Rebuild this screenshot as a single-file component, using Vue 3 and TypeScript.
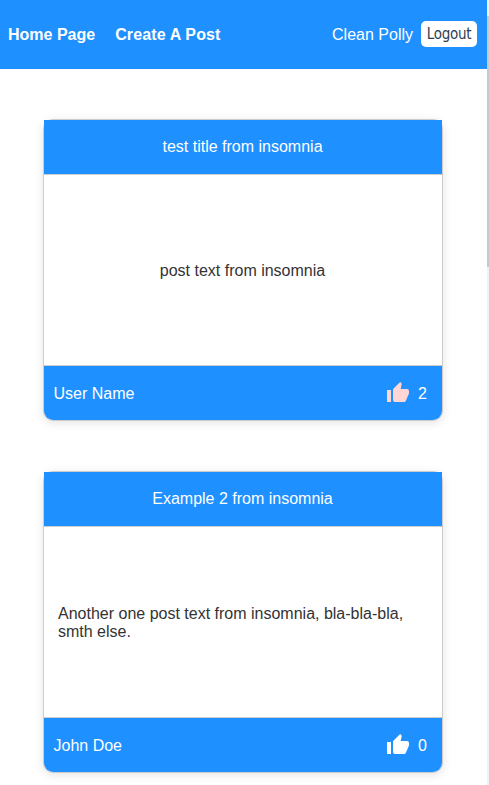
<script setup lang="ts">
import { ref } from 'vue'

interface Post {
  id: number
  title: string
  text: string
  author: string
  likes: number
  liked: boolean
}

const userName = ref('Clean Polly')

const posts = ref<Post[]>([
  { id: 1, title: 'test title from insomnia', text: 'post text from insomnia', author: 'User Name', likes: 2, liked: true },
  { id: 2, title: 'Example 2 from insomnia', text: 'Another one post text from insomnia, bla-bla-bla, smth else.', author: 'John Doe', likes: 0, liked: false },
])

function toggleLike(post: Post): void {
  post.liked = !post.liked
  post.likes += post.liked ? 1 : -1
}
</script>

<template>
  <div class="app">
    <div class="page">
      <header class="topbar">
        <nav class="links">
          <a class="link">Home Page</a>
          <a class="link wide">Create A Post</a>
        </nav>
        <div class="account">
          <span>{{ userName }}</span>
          <button class="logout" type="button">Logout</button>
        </div>
      </header>
      <main class="posts">
        <article v-for="post in posts" :key="post.id" class="card">
          <div class="card-title">{{ post.title }}</div>
          <div class="card-body"><p>{{ post.text }}</p></div>
          <div class="card-footer">
            <span class="label">{{ post.author }}</span>
            <div class="likes">
              <svg class="thumb" :class="{ liked: post.liked }" viewBox="0 0 24 24" @click="toggleLike(post)">
                <path d="M1 21h4V9H1v12zm22-11c0-1.1-.9-2-2-2h-6.31l.95-4.57.03-.32c0-.41-.17-.79-.44-1.06L14.17 1 7.59 7.59C7.22 7.95 7 8.45 7 9v10c0 1.1.9 2 2 2h9c.83 0 1.54-.5 1.84-1.22l3.02-7.05c.09-.23.14-.47.14-.73v-2z" />
              </svg>
              <span class="label">{{ post.likes }}</span>
            </div>
          </div>
        </article>
      </main>
    </div>
    <div class="scroll-track">
      <div class="scroll-thumb"></div>
    </div>
  </div>
</template>

<style>
body {
  margin: 0;
  overflow: hidden;
}
</style>

<style scoped>
.app {
  display: flex;
  height: 785px;
  overflow: hidden;
  background: #fff;
  color: #333;
  font: 16px/18px "Liberation Sans", Arial, sans-serif;
}
.page {
  flex: 1;
  min-width: 0;
}
.topbar {
  display: flex;
  align-items: center;
  justify-content: space-between;
  box-sizing: border-box;
  height: 69px;
  padding: 0 10px 0 8px;
  background: #1e90ff;
  color: #fff;
}
.links {
  display: flex;
  gap: 20px;
}
.link {
  font-weight: 700;
}
.link.wide {
  letter-spacing: 0.13px;
}
.account {
  display: flex;
  align-items: center;
  gap: 8px;
}
.logout {
  width: 56px;
  height: 26px;
  margin: 0 0 1px;
  padding: 1px 0 0;
  border: 0;
  border-radius: 5px;
  background: #fff;
  color: #2c3e50;
  font: 15px/25px "DejaVu Sans Condensed", "DejaVu Sans", sans-serif;
  font-stretch: condensed;
  letter-spacing: -0.3px;
}
.posts {
  display: flex;
  flex-direction: column;
  gap: 50px;
  padding: 50px 44px 0 43px;
}
.card {
  box-sizing: border-box;
  width: 400px;
  height: 302px;
  display: flex;
  flex-direction: column;
  border: 1px solid #ccc;
  border-radius: 10px;
  box-shadow: 0 2px 10px rgba(0, 0, 0, 0.11);
}
.card-title {
  display: flex;
  align-items: center;
  justify-content: center;
  height: 54px;
  padding-right: 1px;
  border-bottom: 1px solid #ccc;
  background: #1e90ff;
  color: #fff;
}
.card-body {
  flex: 1;
  display: flex;
  align-items: center;
  justify-content: center;
  padding: 2px 15px 0 14px;
}
.card-body p {
  margin: 0;
}
.card-footer {
  display: flex;
  align-items: center;
  justify-content: space-between;
  height: 54px;
  padding: 0 15px 0 9.5px;
  border-top: 1px solid #ccc;
  border-radius: 0 0 9px 9px;
  background: #1e90ff;
  color: #fff;
}
.label {
  padding-top: 2px;
}
.likes {
  display: flex;
  align-items: center;
  gap: 8px;
}
.thumb {
  width: 24px;
  height: 24px;
  fill: #fff;
}
.thumb.liked {
  fill: #ffd6d6;
}
.scroll-track {
  width: 2px;
  padding-top: 16px;
  background: #f1f1f1;
}
.scroll-thumb {
  height: 251px;
  background: #c9c9c9;
}
</style>
